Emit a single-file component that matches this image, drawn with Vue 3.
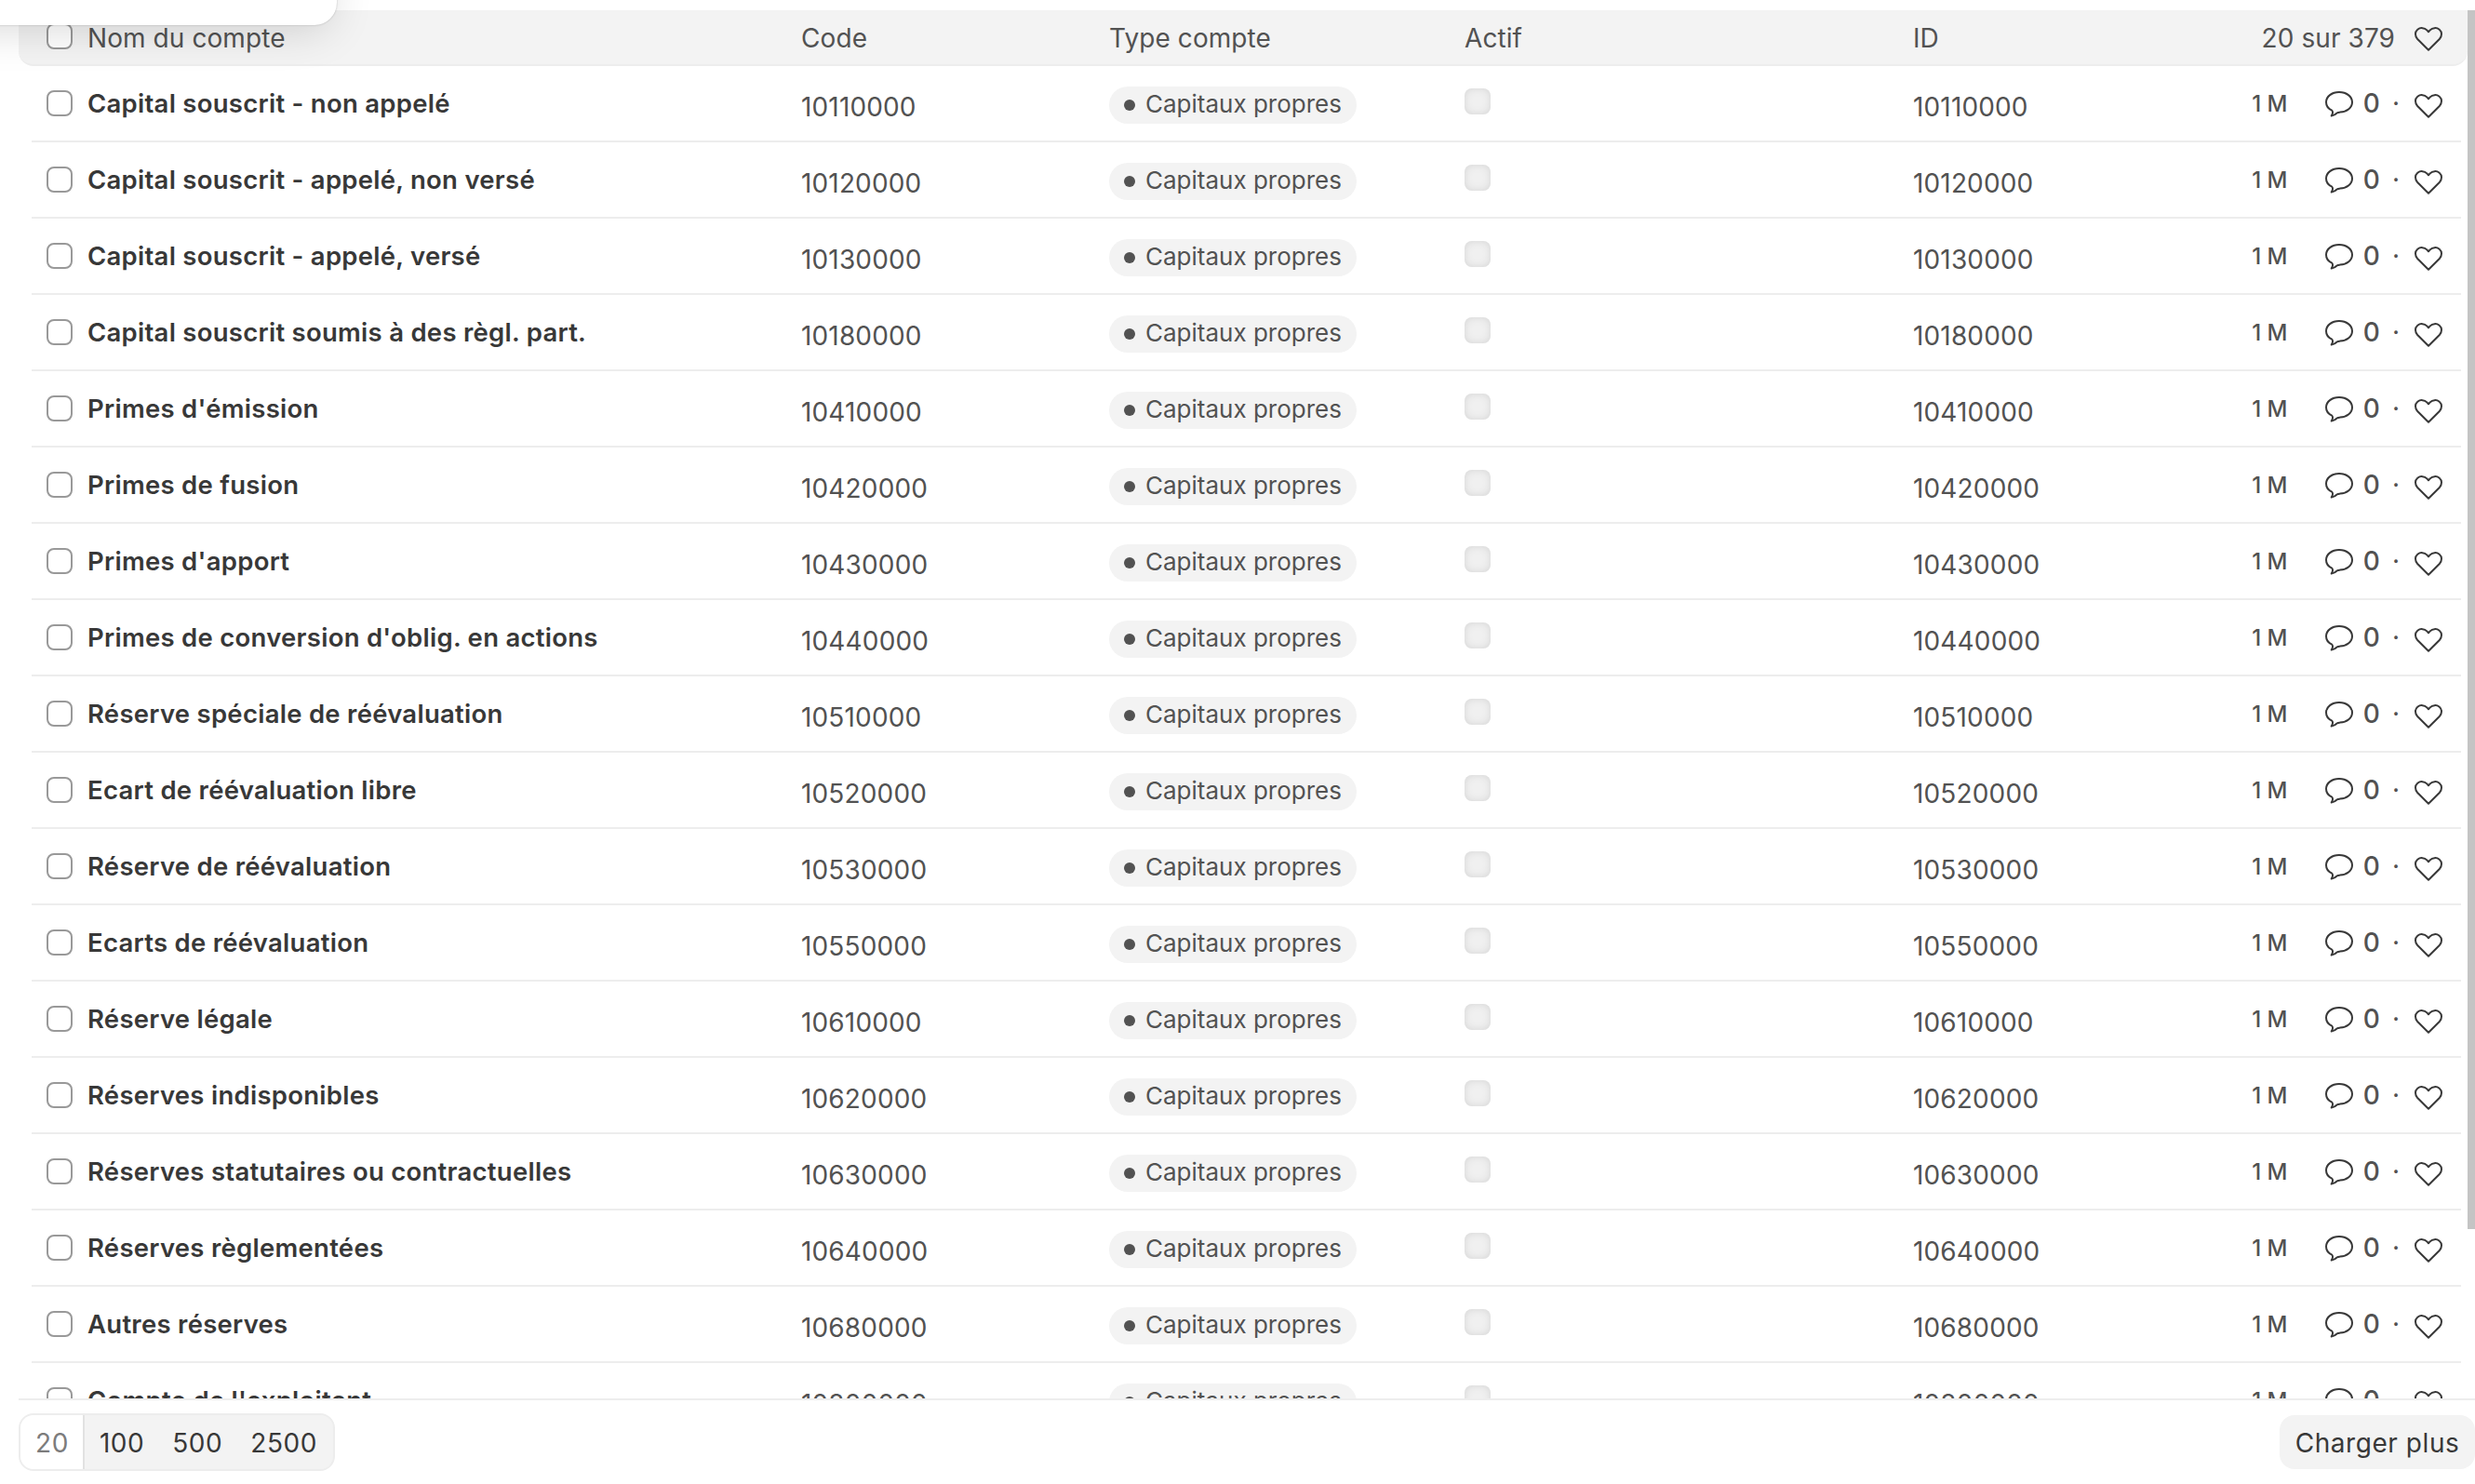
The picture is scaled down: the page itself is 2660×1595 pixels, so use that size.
<template>
  <div class="list-view">
    <div class="result">
      <div class="list-row-head">
        <div class="col subject">
          <span class="checkbox"></span>
          <span>Nom du compte</span>
        </div>
        <div class="col">Code</div>
        <div class="col">Type compte</div>
        <div class="col">Actif</div>
        <div class="col">ID</div>
        <div class="col head-meta">
          <span class="list-count">20 sur 379</span>
          <svg class="icon heart" viewBox="0 0 30 26">
            <path :d="heartPath" />
          </svg>
        </div>
      </div>

      <div v-for="account in accounts" :key="account.code" class="list-row">
        <div class="col subject">
          <span class="checkbox"></span>
          <span class="name">{{ account.name }}</span>
        </div>
        <div class="col number">{{ account.code }}</div>
        <div class="col">
          <span class="pill"><span class="pill-dot"></span><span class="pill-label">Capitaux propres</span></span>
        </div>
        <div class="col"><span class="checkbox disabled"></span></div>
        <div class="col number">{{ account.code }}</div>
        <div class="col activity">
          <span class="modified">1 M</span>
          <svg class="icon comment" viewBox="0 0 30 28">
            <path d="M15 1C7.200 1 1 5.700 1 11.800C1 15.700 3.300 18.900 7.200 20.600C8.400 21.900 8 24.500 6.700 26.600C9.300 26.200 11.300 24.900 13 23.300C14 22.600 14.900 22.700 16 22.600C23.500 22.200 29 17.800 29 11.800C29 5.700 22.800 1 15 1Z" />
          </svg>
          <span class="comment-count">0</span>
          <span class="separator">·</span>
          <svg class="icon heart" viewBox="0 0 30 26">
            <path :d="heartPath" />
          </svg>
        </div>
      </div>
    </div>

    <div class="paging">
      <div class="btn-group">
        <button
          v-for="size in pageSizes"
          :key="size"
          class="btn-paging"
          :class="{ active: size === pageLength }"
          @click="pageLength = size"
        >{{ size }}</button>
      </div>
      <button class="btn-more">Charger plus</button>
    </div>

    <div class="popover"></div>
    <div class="scrollbar"></div>
  </div>
</template>

<script setup>
import { ref } from 'vue'

const heartPath = 'M15 24.700L3.200 13C0.200 9.800 0.300 5.200 3.300 2.700C6.300 0.300 10.700 0.700 13.300 3.400L15 5.200L16.700 3.400C19.300 0.700 23.700 0.300 26.700 2.700C29.700 5.200 29.800 9.800 26.800 13Z'

const pageSizes = [20, 100, 500, 2500]
const pageLength = ref(20)

const accounts = [
  { name: 'Capital souscrit - non appelé', code: '10110000' },
  { name: 'Capital souscrit - appelé, non versé', code: '10120000' },
  { name: 'Capital souscrit - appelé, versé', code: '10130000' },
  { name: 'Capital souscrit soumis à des règl. part.', code: '10180000' },
  { name: "Primes d'émission", code: '10410000' },
  { name: 'Primes de fusion', code: '10420000' },
  { name: "Primes d'apport", code: '10430000' },
  { name: "Primes de conversion d'oblig. en actions", code: '10440000' },
  { name: 'Réserve spéciale de réévaluation', code: '10510000' },
  { name: 'Ecart de réévaluation libre', code: '10520000' },
  { name: 'Réserve de réévaluation', code: '10530000' },
  { name: 'Ecarts de réévaluation', code: '10550000' },
  { name: 'Réserve légale', code: '10610000' },
  { name: 'Réserves indisponibles', code: '10620000' },
  { name: 'Réserves statutaires ou contractuelles', code: '10630000' },
  { name: 'Réserves règlementées', code: '10640000' },
  { name: 'Autres réserves', code: '10680000' },
  { name: "Compte de l'exploitant", code: '10800000' }
]
</script>

<style>
body {
  overflow: hidden;
  background: #fff;
}
</style>

<style scoped>
.list-view {
  position: relative;
  box-sizing: border-box;
  width: 2660px;
  height: 1595px;
  padding-top: 11px;
  overflow: hidden;
  color: #525252;
  font-family: Inter, "Liberation Sans", sans-serif;
  font-size: 28px;
  letter-spacing: 0.08px;
  line-height: 34px;
  white-space: nowrap;
}

.result {
  width: 2632px;
  height: 1492px;
  margin-left: 20px;
  overflow: hidden;
}

.list-row-head,
.list-row {
  display: grid;
  grid-template-columns: 811px 331px 382px 482px 256px 1fr;
  box-sizing: border-box;
}

.list-row-head {
  height: 60px;
  padding: 2px 27px 0 30px;
  align-items: center;
  background: #f3f3f3;
  border-bottom: 2px solid #ededed;
  border-radius: 0 0 16px 16px;
}

.list-row {
  height: 82px;
  margin: 0 7px 0 14px;
  padding: 0 20px 0 16px;
  border-bottom: 2px solid #ededed;
}

.list-row .col {
  padding-top: 23px;
}

.list-row .number {
  padding-top: 27px;
  letter-spacing: 0.15px;
}

.subject {
  display: flex;
  align-items: flex-start;
}

.name {
  color: #383838;
  font-size: 27.5px;
  font-weight: 600;
  letter-spacing: 0.27px;
}

.checkbox {
  display: block;
  box-sizing: border-box;
  flex: none;
  width: 28px;
  height: 28px;
  margin: 3px 16px 0 0;
  background: #fff;
  border: 2px solid #999;
  border-radius: 8px;
}

.list-row-head .checkbox {
  margin-top: 1px;
}

.checkbox.disabled {
  margin-top: 1px;
  background: #f0f0f0;
  border: 0;
  box-shadow: inset 0 0 8px #d4d4d4;
}

.pill {
  display: flex;
  align-items: center;
  box-sizing: border-box;
  width: 266px;
  height: 40px;
  margin-top: -1px;
  padding-left: 16px;
  background: #f3f3f3;
  border-radius: 20px;
  font-size: 26px;
  letter-spacing: 0;
}

.pill-dot {
  width: 12px;
  height: 12px;
  margin-right: 11px;
  background: #525252;
  border-radius: 50%;
}

.pill-label {
  padding-bottom: 2px;
}

.head-meta,
.activity {
  display: flex;
  justify-content: flex-end;
  align-items: flex-start;
}

.list-count {
  margin-right: 21px;
}

.icon {
  flex: none;
  overflow: visible;
  fill: none;
  stroke: #383838;
  stroke-width: 2;
  stroke-linejoin: round;
}

.heart {
  width: 30px;
  height: 26px;
  margin-top: 5px;
}

.list-row .heart {
  margin-top: 7px;
}

.comment {
  width: 30px;
  height: 28px;
  margin: 4px 11px 0 40px;
}

.modified {
  margin-top: 1px;
  font-size: 24px;
  font-weight: 500;
  letter-spacing: 0.48px;
  word-spacing: -1px;
}

.comment-count {
  font-weight: 500;
}

.separator {
  width: 10px;
  margin: 0 15px 0 12px;
  text-align: center;
}

.paging {
  display: flex;
  justify-content: space-between;
  align-items: center;
  box-sizing: border-box;
  height: 92px;
  margin-left: 20px;
  border-top: 2px solid #ededed;
}

.btn-group {
  display: flex;
  box-sizing: border-box;
  width: 340px;
  height: 62px;
  overflow: hidden;
  background: #f3f3f3;
  border: 2px solid #ededed;
  border-radius: 16px;
}

button {
  margin: 0;
  padding: 2px 0 0;
  border: 0;
  background: #f3f3f3;
  color: #383838;
  font: inherit;
  letter-spacing: 0.56px;
}

.btn-paging {
  padding: 2px 14px 0 16px;
}

.btn-paging.active {
  padding: 2px 15px 0 16px;
  background: #fff;
  border-right: 2px solid #e2e2e2;
  color: #7c7c7c;
}

.btn-more {
  width: 210px;
  height: 58px;
  border-radius: 16px;
}

/* bottom edge of the filter popover, over the list header */
.popover {
  position: absolute;
  top: -60px;
  left: -60px;
  width: 422px;
  height: 87px;
  background: #fff;
  border-radius: 24px;
  box-shadow: 0 0 2px rgba(0, 0, 0, 0.25), 0 12px 48px -8px rgba(0, 0, 0, 0.16);
}

.scrollbar {
  position: absolute;
  top: 11px;
  right: 0;
  width: 8px;
  height: 1310px;
  background: #c4c4c4;
}
</style>
